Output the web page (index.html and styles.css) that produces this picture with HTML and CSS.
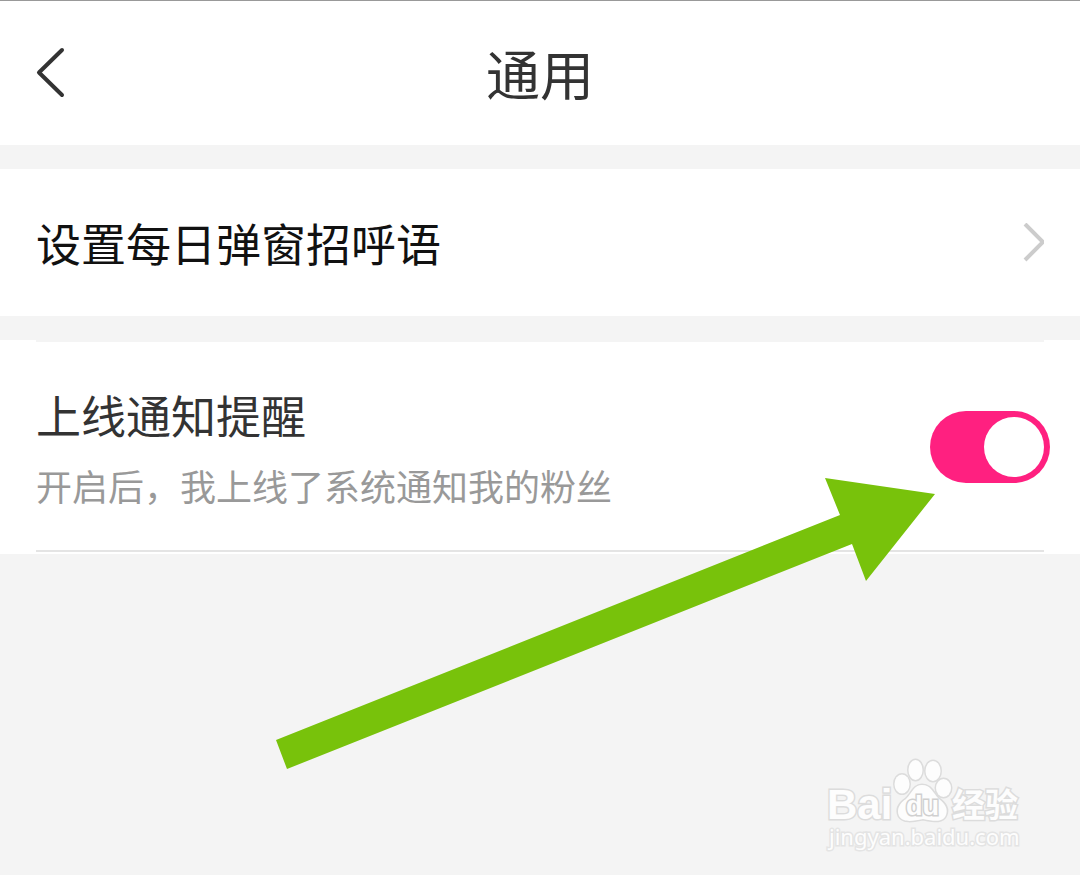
FILE: index.html
```html
<!DOCTYPE html>
<html lang="zh-CN">
<head>
    <meta charset="UTF-8">
    <meta name="viewport" content="width=device-width, initial-scale=1.0">
    <title>通用</title>
    <link rel="stylesheet" href="styles.css">
</head>
<body>
    <header class="header">
        <button type="button" class="back" aria-label="返回">
            <svg width="30" height="52" viewBox="0 0 30 52" fill="none" stroke="#333" stroke-width="4" stroke-linecap="round" stroke-linejoin="round">
                <path d="M26 3 L3 25.500 L26 48"/>
            </svg>
        </button>
        <h1>通用</h1>
    </header>

    <main>
        <a class="row" href="#greeting">
            <span>设置每日弹窗招呼语</span>
            <svg width="22" height="40" viewBox="0 0 22 40" fill="none" stroke="#ccc" stroke-width="4">
                <path d="M3 1 L21 19 L3 37"/>
            </svg>
        </a>

        <section class="notice">
            <div class="notice-inner">
                <div>
                    <label for="online">上线通知提醒</label>
                    <p id="onlineHint">开启后，我上线了系统通知我的粉丝</p>
                </div>
                <input type="checkbox" id="online" class="switch" role="switch" aria-describedby="onlineHint" checked>
            </div>
            <svg class="arrow" width="660" height="292" viewBox="0 0 660 292" aria-hidden="true">
                <path fill="#78c20b" d="M0 262 L564 37 L549 0 L659 16 L590 103 L576 66 L11 291 Z"/>
            </svg>
        </section>
    </main>

    <svg class="watermark" width="204" height="100" viewBox="0 0 204 100">
        <text class="wm-bai" x="3" y="63">Bai</text>
        <ellipse cx="78" cy="28" rx="7.500" ry="9.500"/>
        <ellipse cx="91.500" cy="14" rx="7" ry="10"/>
        <ellipse cx="109" cy="15" rx="7.500" ry="10"/>
        <ellipse cx="119.500" cy="32" rx="7.500" ry="9"/>
        <path d="M98 29 C107 29 109 37 115 43 C122 48 124 54 122 59 C119 67 110 65 99 63 C89 65 79 67 75 60 C72 53 76 47 82 43 C88 37 90 29 98 29 Z"/>
        <text class="wm-du" x="82" y="59">du</text>
        <text class="wm-cn" x="128" y="61">经验</text>
        <text class="wm-url" x="5" y="89">jingyan.baidu.com</text>
    </svg>
</body>
</html>
```
FILE: styles.css
```css
* {
    box-sizing: border-box;
}

body {
    position: relative;
    min-height: 100vh;
    margin: 0;
    border-top: 1px solid #999;
    background-color: #f4f4f4;
    color: #333;
    font-family: "Noto Sans CJK SC", sans-serif;
}

.header {
    display: grid;
    grid-template-columns: 64px 1fr 64px;
    align-items: center;
    height: 144px;
    padding: 0 36px;
    background-color: #fff;
}

.header h1 {
    margin: 0;
    font-size: 54px;
    line-height: 80px;
    font-weight: 400;
    text-align: center;
}

.back {
    display: flex;
    padding: 0;
    border: none;
    background: none;
    cursor: pointer;
}

.row {
    display: flex;
    justify-content: space-between;
    align-items: center;
    height: 147px;
    margin: 24px 0;
    padding: 0 36px;
    background-color: #fff;
    color: #111;
    font-size: 45px;
    line-height: 64px;
    text-decoration: none;
}

.notice {
    position: relative;
    padding: 0 36px 2px;
    background-color: #fff;
}

.notice-inner {
    display: flex;
    justify-content: space-between;
    align-items: center;
    height: 212px;
    padding-top: 2px;
    border-top: 2px solid #f4f4f4;
    border-bottom: 2px solid #e4e4e4;
}

.notice label {
    display: block;
    font-size: 45px;
    line-height: 64px;
}

.notice p {
    margin: 12px 0 0;
    color: #999;
    font-size: 36px;
    line-height: 52px;
}

.switch {
    appearance: none;
    display: flex;
    justify-content: flex-end;
    width: 120px;
    height: 72px;
    margin: 0 -6px 0 0;
    padding: 6px;
    border-radius: 36px;
    background-color: #ff2080;
    cursor: pointer;
}

.switch::before {
    content: "";
    width: 60px;
    height: 60px;
    border-radius: 50%;
    background-color: #fff;
}

.switch:not(:checked) {
    justify-content: flex-start;
    background-color: #ccc;
}

/* arrow lies over the card and the page below it */
.arrow {
    position: absolute;
    top: 138px;
    right: 144px;
    pointer-events: none;
}

.watermark {
    position: absolute;
    right: 52px;
    bottom: 19px;
    fill: #fdfdfd;
    stroke: #dcdcdc;
    stroke-width: 3px;
    paint-order: stroke;
}

.wm-bai {
    font: bold 42px "Liberation Sans", sans-serif;
}

.wm-du {
    font: bold 27px "Liberation Sans", sans-serif;
    stroke: #d0d0d0;
}

.wm-cn {
    font: bold 33px "Noto Sans CJK SC", sans-serif;
}

.wm-url {
    font: 22px "Noto Sans", sans-serif;
    stroke: #e4e4e4;
}
```
